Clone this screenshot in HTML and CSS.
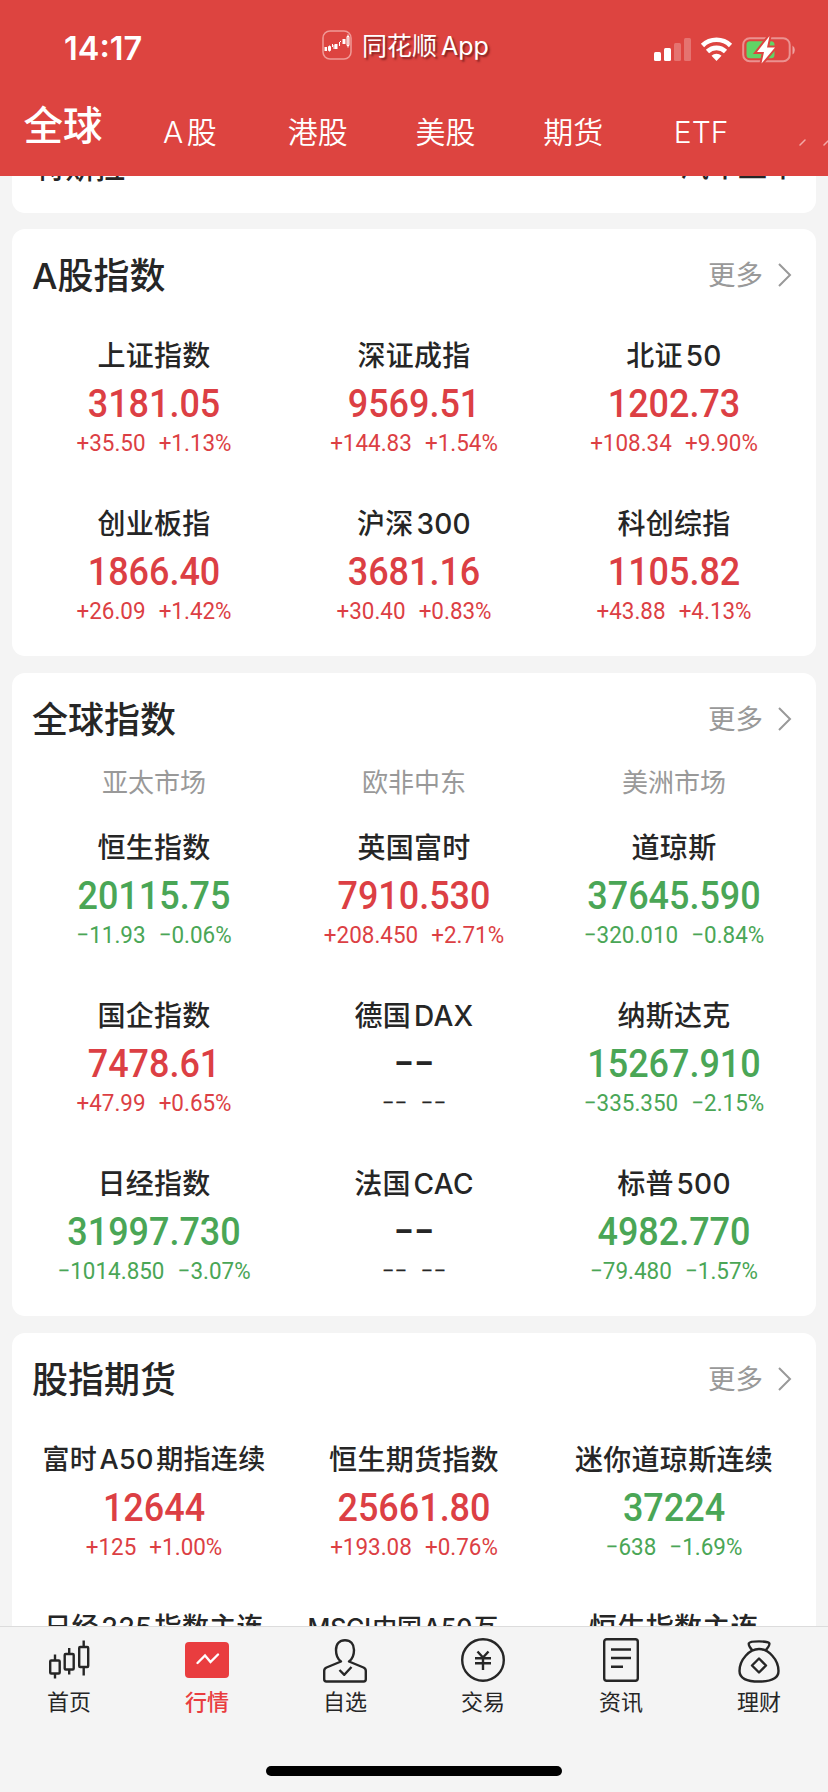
FILE: index.html
```html
<!DOCTYPE html>
<html lang="zh-CN">
<head>
    <meta charset="UTF-8">
    <meta name="viewport" content="width=device-width, initial-scale=1.0">
    <title>同花顺 - 全球行情</title>
    <link rel="stylesheet" href="styles.css">
</head>
<body>
    <header class="top">
        <div class="status-bar">
            <span class="time">14:17</span>
            <div class="app-badge">
                <svg width="30" height="30" viewBox="0 0 30 30">
                    <rect x="1" y="1" width="28" height="28" rx="7" fill="none" stroke="#f09a97" stroke-width="1.5"/>
                    <g fill="none" stroke="#fff" stroke-width="1">
                        <path d="M3 17v4M6.500 16.500h2v4h-2zM7.500 15.500v6M10.500 14v3M12 15v4M17.500 12v4M18.500 12v-1M25 6.500h2v9h-2zM26 4.500v13"/>
                        <path d="M4 17v4M13.500 14v5M14.500 14v5M21.500 9v5M22.500 9v5" stroke-width="2"/>
                    </g>
                </svg>
                <span>同花顺 App</span>
            </div>
            <svg class="status-icons" width="144" height="30" viewBox="0 0 144 30">
                <g fill="#fff">
                    <rect x="1" y="16" width="7" height="9" rx="1.500"/>
                    <rect x="11" y="12" width="7" height="13" rx="1.500"/>
                    <rect x="21" y="7" width="7" height="18" rx="1.500" opacity=".25"/>
                    <rect x="31" y="2" width="7" height="23" rx="1.500" opacity=".25"/>
                </g>
                <g fill="none" stroke="#fff" stroke-width="4.600">
                    <path d="M49.500 9.500a20 20 0 0 1 28 0"/>
                    <path d="M54.500 15.500a13 13 0 0 1 18 0"/>
                </g>
                <path d="M63.500 25l-5-5.300a7.200 7.200 0 0 1 10 0z" fill="#fff"/>
                <rect x="90.200" y="2.200" width="46.500" height="23" rx="6.500" fill="none" stroke="#fff" stroke-opacity=".42" stroke-width="2"/>
                <path d="M139.500 9.500a5.500 5.500 0 0 1 0 9z" fill="#fff" opacity=".5"/>
                <rect x="93.500" y="5.200" width="28" height="17" rx="3.500" fill="#61d465"/>
                <path d="M116.500 0l-12.500 16h7l-2.500 11.500 13.500-16h-8z" fill="#fff" stroke="#dd4440" stroke-width="4" paint-order="stroke"/>
            </svg>
        </div>
        <nav class="market-tabs">
            <a class="tab active">全球</a>
            <a class="tab">A 股</a>
            <a class="tab">港股</a>
            <a class="tab">美股</a>
            <a class="tab">期货</a>
            <a class="tab">ETF</a>
            <svg class="tab-fade" width="32" height="12" viewBox="0 0 32 12">
                <path d="M4 9l5-5M28 9l4-4" stroke="#f3aaa7" stroke-width="1.500" stroke-linecap="round"/>
            </svg>
        </nav>
    </header>

    <main class="content">
        <section class="card sector-card">
            <div class="sector-row">
                <span class="sector-stock">特斯拉</span>
                <span class="sector-rate">+67.843</span>
                <span class="sector-name">汽车整车</span>
            </div>
        </section>

        <section class="card">
            <div class="card-head">
                <h2>A股指数</h2>
                <a class="more">更多 <svg width="16" height="24" viewBox="0 0 16 24"><path d="M2 1l11 11L2 23"/></svg></a>
            </div>
            <div class="quotes">
                <div class="quote up"><h3>上证指数</h3><b>3181.05</b><p><span>+35.50</span><span>+1.13%</span></p></div>
                <div class="quote up"><h3>深证成指</h3><b>9569.51</b><p><span>+144.83</span><span>+1.54%</span></p></div>
                <div class="quote up"><h3>北证 50</h3><b>1202.73</b><p><span>+108.34</span><span>+9.90%</span></p></div>
                <div class="quote up"><h3>创业板指</h3><b>1866.40</b><p><span>+26.09</span><span>+1.42%</span></p></div>
                <div class="quote up"><h3>沪深 300</h3><b>3681.16</b><p><span>+30.40</span><span>+0.83%</span></p></div>
                <div class="quote up"><h3>科创综指</h3><b>1105.82</b><p><span>+43.88</span><span>+4.13%</span></p></div>
            </div>
        </section>

        <section class="card">
            <div class="card-head">
                <h2>全球指数</h2>
                <a class="more">更多 <svg width="16" height="24" viewBox="0 0 16 24"><path d="M2 1l11 11L2 23"/></svg></a>
            </div>
            <div class="regions">
                <span>亚太市场</span>
                <span>欧非中东</span>
                <span>美洲市场</span>
            </div>
            <div class="quotes after-regions">
                <div class="quote down"><h3>恒生指数</h3><b>20115.75</b><p><span>−11.93</span><span>−0.06%</span></p></div>
                <div class="quote up"><h3>英国富时</h3><b>7910.530</b><p><span>+208.450</span><span>+2.71%</span></p></div>
                <div class="quote down"><h3>道琼斯</h3><b>37645.590</b><p><span>−320.010</span><span>−0.84%</span></p></div>
                <div class="quote up"><h3>国企指数</h3><b>7478.61</b><p><span>+47.99</span><span>+0.65%</span></p></div>
                <div class="quote empty"><h3>德国 DAX</h3><b>−−</b><p><span>−−</span><span>−−</span></p></div>
                <div class="quote down"><h3>纳斯达克</h3><b>15267.910</b><p><span>−335.350</span><span>−2.15%</span></p></div>
                <div class="quote down"><h3>日经指数</h3><b>31997.730</b><p><span>−1014.850</span><span>−3.07%</span></p></div>
                <div class="quote empty"><h3>法国 CAC</h3><b>−−</b><p><span>−−</span><span>−−</span></p></div>
                <div class="quote down"><h3>标普 500</h3><b>4982.770</b><p><span>−79.480</span><span>−1.57%</span></p></div>
            </div>
        </section>

        <section class="card">
            <div class="card-head">
                <h2>股指期货</h2>
                <a class="more">更多 <svg width="16" height="24" viewBox="0 0 16 24"><path d="M2 1l11 11L2 23"/></svg></a>
            </div>
            <div class="quotes">
                <div class="quote up"><h3 class="long">富时 A50 期指连续</h3><b>12644</b><p><span>+125</span><span>+1.00%</span></p></div>
                <div class="quote up"><h3>恒生期货指数</h3><b>25661.80</b><p><span>+193.08</span><span>+0.76%</span></p></div>
                <div class="quote down"><h3>迷你道琼斯连续</h3><b>37224</b><p><span>−638</span><span>−1.69%</span></p></div>
                <div class="quote"><h3 class="long">日经 225 指数主连</h3></div>
                <div class="quote"><h3 class="longer">MSCI 中国 A50 互...</h3></div>
                <div class="quote"><h3>恒生指数主连</h3></div>
            </div>
        </section>
    </main>

    <footer class="bottom">
        <nav class="tabbar">
            <a class="tabbar-item">
                <svg width="48" height="48" viewBox="0 0 48 48">
                    <g fill="none" stroke="#262626" stroke-width="2.400">
                        <rect x="5.200" y="23.500" width="9.500" height="13" rx="1"/>
                        <path d="M10 17.500v6M10 36.500v5"/>
                        <rect x="19.700" y="17" width="9" height="15.500" rx="1"/>
                        <path d="M24.200 11v6M24.200 32.500v5"/>
                        <rect x="34.200" y="10" width="9" height="20" rx="1"/>
                        <path d="M38.700 3.500v6.500M38.700 30v8.500"/>
                    </g>
                </svg>
                <span>首页</span>
            </a>
            <a class="tabbar-item active">
                <svg width="48" height="48" viewBox="0 0 48 48">
                    <rect x="2" y="5" width="44" height="36" rx="4" fill="#e93d3f"/>
                    <path d="M14.500 26l7.500-7.500 5.500 6.500 7.500-7.500" fill="none" stroke="#fff" stroke-width="2.400" stroke-linecap="round"/>
                </svg>
                <span>行情</span>
            </a>
            <a class="tabbar-item">
                <svg width="48" height="48" viewBox="0 0 48 48">
                    <g fill="none" stroke="#262626" stroke-width="2.400" stroke-linejoin="round">
                        <path d="M20 24.500c-3.500-2.500-5-6.500-5-11.500 0-6 3.500-9.800 9-9.800s9 3.800 9 9.800c0 5-1.500 9-5 11.500l14.500 6c1.500.7 2.300 1.700 2.300 3.300v8.500c0 1.500-.8 2.200-2.200 2.200H5.400c-1.400 0-2.200-.7-2.200-2.200v-8.500c0-1.600.8-2.600 2.300-3.300z"/>
                        <path d="M18.500 33l4.800 4.800 7.200-7.800"/>
                    </g>
                </svg>
                <span>自选</span>
            </a>
            <a class="tabbar-item">
                <svg width="48" height="48" viewBox="0 0 48 48">
                    <g fill="none" stroke="#262626" stroke-width="2.400">
                        <circle cx="24" cy="23" r="20.800"/>
                        <path d="M18.500 14.500l5.500 6 5.500-6M16 21.200h16M16 26.200h16M24 20.500v12.500"/>
                    </g>
                </svg>
                <span>交易</span>
            </a>
            <a class="tabbar-item">
                <svg width="48" height="48" viewBox="0 0 48 48">
                    <g fill="none" stroke="#262626" stroke-width="2.400">
                        <rect x="7.200" y="2.200" width="33.600" height="41.600" rx="2.500"/>
                        <path d="M14 12.500h20M14 21h20M14 29.700h12"/>
                    </g>
                </svg>
                <span>资讯</span>
            </a>
            <a class="tabbar-item">
                <svg width="48" height="48" viewBox="0 0 48 48">
                    <g fill="none" stroke="#262626" stroke-width="2.400" stroke-linejoin="round">
                        <path d="M17.500 13.500c-2-2.300-4.300-5.500-3.600-7.300.7-1.400 4.300-1.800 10.100-1.800s9.600.4 10.300 1.800c.7 1.800-1.800 5-3.800 7.300"/>
                        <path d="M24 12c9.500 0 19.500 10.500 19.500 22 0 7.500-7 10.500-19.500 10.500S4.500 41.500 4.500 34C4.500 22.500 14.500 12 24 12z"/>
                        <path d="M24 21.500l7 7-7 7-7-7z"/>
                    </g>
                </svg>
                <span>理财</span>
            </a>
        </nav>
        <div class="home-indicator"></div>
    </footer>
</body>
</html>
```
FILE: styles.css
```css
* {
    box-sizing: border-box;
}
body {
    margin: 0;
    height: 100vh;
    display: flex;
    flex-direction: column;
    overflow: hidden;
    background: #f4f4f4;
    color: #262626;
    font-family: Inter, "Noto Sans CJK SC", sans-serif;
}
h2, h3, p {
    margin: 0;
}

/* red header */
.top {
    flex: none;
    height: 176px;
    background: #dd4440;
    color: #fff;
}
.status-bar {
    height: 98px;
    display: flex;
    align-items: flex-start;
}
.time {
    width: 258px;
    padding: 29px 0 0 64px;
    font-size: 32.5px;
    font-weight: 600;
    line-height: 40px;
}
.app-badge {
    width: 266px;
    padding: 30px 0 0 64px;
    display: flex;
    gap: 10px;
    font-size: 25px;
    line-height: 32px;
    white-space: nowrap;
    word-spacing: -3px;
    text-shadow: 2px 2px 2px rgba(90, 20, 20, 0.7);
}
.app-badge svg {
    flex: none;
}
.status-icons {
    margin: 36px 0 0 129px;
}
.market-tabs {
    position: relative;
    display: flex;
}
.tab {
    width: 127.8px;
    text-align: center;
    font-size: 30px;
    font-weight: 350;
    line-height: 48px;
    padding-top: 10px;
    white-space: nowrap;
    word-spacing: -5px;
}
.tab.active {
    width: 126px;
    font-size: 39.5px;
    font-weight: 500;
    padding-top: 4px;
}
.tab-fade {
    position: absolute;
    right: 0;
    top: 38px;
}

/* cards */
.content {
    flex: 1;
    min-height: 0;
    overflow: hidden;
    padding: 0 12px;
}
.card {
    background: #fff;
    border-radius: 13px;
    padding: 0 12px 33px;
    margin-bottom: 17px;
}
.sector-card {
    height: 37px;
    border-radius: 0 0 13px 13px;
    margin-bottom: 16px;
    overflow: hidden;
}
.sector-row {
    display: flex;
    margin-top: -26px;
    padding: 0 8px 0 11px;
    line-height: 34px;
    font-weight: 500;
}
.sector-stock {
    flex: 1;
    font-size: 30px;
}
.sector-rate {
    width: 126px;
    font-family: Roboto, sans-serif;
    font-size: 24px;
    line-height: 37px;
    color: #8a7a7a;
}
.sector-name {
    font-size: 29px;
}
.card-head {
    display: flex;
    justify-content: space-between;
    align-items: center;
    height: 92px;
    padding: 0 11px 0 8px;
}
.card-head h2 {
    font-size: 36px;
    font-weight: 500;
    padding-bottom: 4px;
}
.more {
    display: flex;
    align-items: center;
    gap: 14px;
    font-size: 27.5px;
    line-height: 38px;
    color: #999;
}
.more svg {
    fill: none;
    stroke: #999;
    stroke-width: 2;
}
.regions {
    display: grid;
    grid-template-columns: repeat(3, 1fr);
    height: 34px;
    line-height: 35px;
    font-size: 26px;
    text-align: center;
    color: #999;
}
.quotes {
    display: grid;
    grid-template-columns: repeat(3, 1fr);
    row-gap: 48px;
    padding-top: 14px;
}
.quotes.after-regions {
    padding-top: 28px;
}
.quote {
    text-align: center;
    white-space: nowrap;
}
.quote h3 {
    font-size: 28px;
    font-weight: 500;
    line-height: 42px;
    height: 40px;
    letter-spacing: 0.3px;
    word-spacing: -5px;
}
.quote h3.long {
    font-size: 27px;
}
.quote h3.longer {
    font-size: 25px;
    letter-spacing: -0.2px;
}
/* Roboto squeezed a little to get narrow ticker digits */
.quote b {
    display: block;
    height: 56px;
    font-family: Roboto, sans-serif;
    font-size: 39.5px;
    font-weight: 500;
    line-height: 58px;
    transform: scaleX(0.91);
}
.quote p {
    display: flex;
    justify-content: center;
    gap: 14px;
    height: 24px;
    font-family: Roboto, sans-serif;
    font-size: 24px;
    font-weight: 450;
    line-height: 25px;
    transform: scaleX(0.935);
}
.up b, .up p {
    color: #dc3f44;
}
.down b, .down p {
    color: #4aa656;
}

/* bottom tab bar */
.bottom {
    flex: none;
    height: 166px;
    background: #f4f4f4;
    border-top: 1px solid #dcdcdc;
}
.tabbar {
    display: grid;
    grid-template-columns: repeat(6, 1fr);
    height: 139px;
    padding-top: 10px;
}
.tabbar-item {
    display: flex;
    flex-direction: column;
    align-items: center;
    font-size: 22px;
    line-height: 34px;
}
.tabbar-item.active {
    color: #e93d3f;
    font-weight: 500;
}
.home-indicator {
    width: 296px;
    height: 10px;
    border-radius: 5px;
    background: #000;
    margin: 0 auto;
}
```
